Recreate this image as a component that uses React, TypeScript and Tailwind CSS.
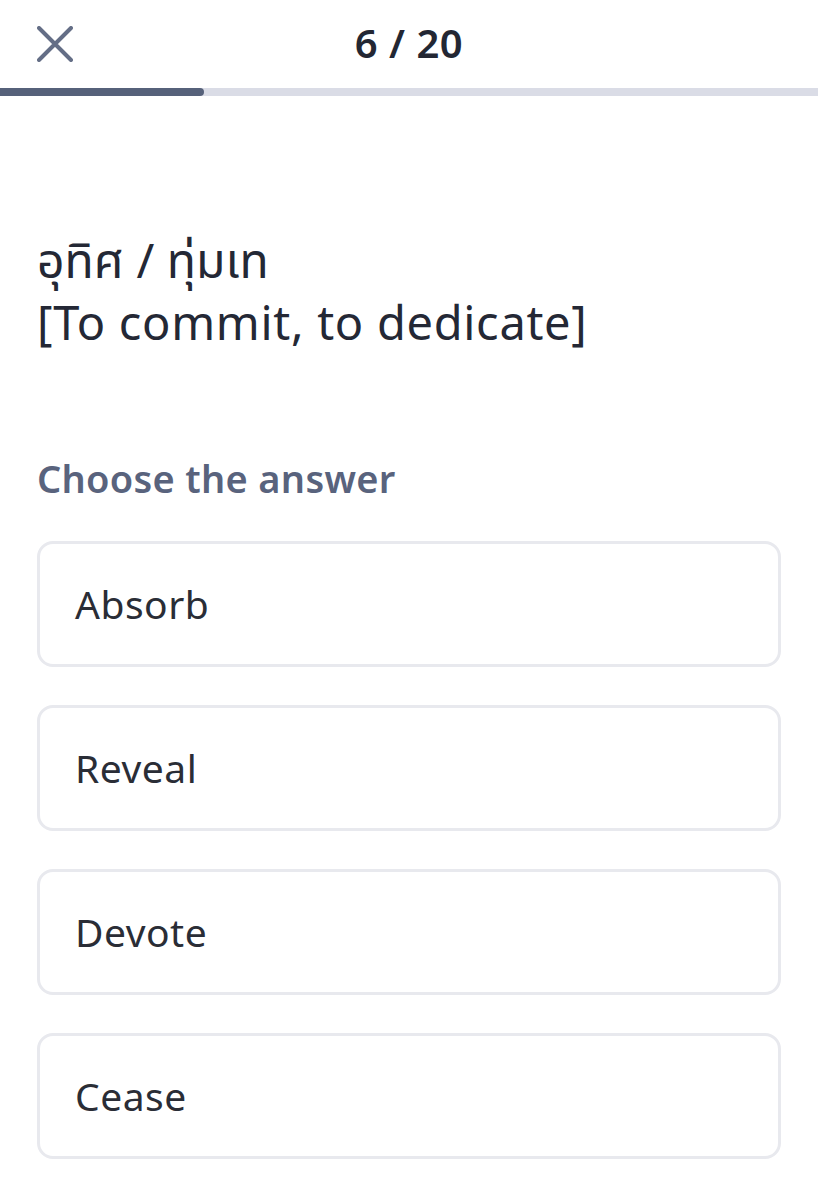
const options = ["Absorb", "Reveal", "Devote", "Cease"];

export default function App() {
  const current = 6;
  const total = 20;

  return (
    <div className="min-h-screen bg-white font-['Noto_Sans','Noto_Sans_Thai',sans-serif]">
      {/* Header */}
      <div className="relative flex h-[88px] items-center justify-center">
        <button className="absolute left-[37px] top-[26px] text-[#646e86]">
          <svg width="36" height="36" viewBox="0 0 36 36" fill="none" stroke="currentColor" strokeWidth="4" strokeLinecap="round">
            <path d="M2 2L34 34M34 2L2 34" />
          </svg>
        </button>
        <span className="pb-0.5 text-[40px] font-semibold tracking-[0.5px] text-[#232733]">
          {current} / {total}
        </span>
      </div>

      {/* Progress */}
      <div className="h-[8px] w-full bg-[#dadce6]">
        <div className="h-full w-[204px] rounded-r-full bg-[#56617a]" />
      </div>

      <div className="px-[37px]">
        {/* Word */}
        <div className="mt-[134px] text-[#242835]">
          <div className="text-[48px] leading-[60px]">อุทิศ / ทุ่มเท</div>
          <div className="mt-[2px] text-[47px] tracking-[0.7px] leading-[60px]">[To commit, to dedicate]</div>
        </div>

        <div className="mt-[98px] text-[38px] font-semibold tracking-[0.3px] text-[#59637d]">
          Choose the answer
        </div>

        <div className="mt-[34px] flex flex-col gap-[38px]">
          {options.map((o) => (
            <button
              key={o}
              className="flex h-[126px] w-full items-center rounded-[16px] border-[3px] border-[#e8e9ee] px-[35px] text-left text-[39px] tracking-[0.5px] text-[#2a2d36]"
            >
              {o}
            </button>
          ))}
        </div>
      </div>
    </div>
  );
}
